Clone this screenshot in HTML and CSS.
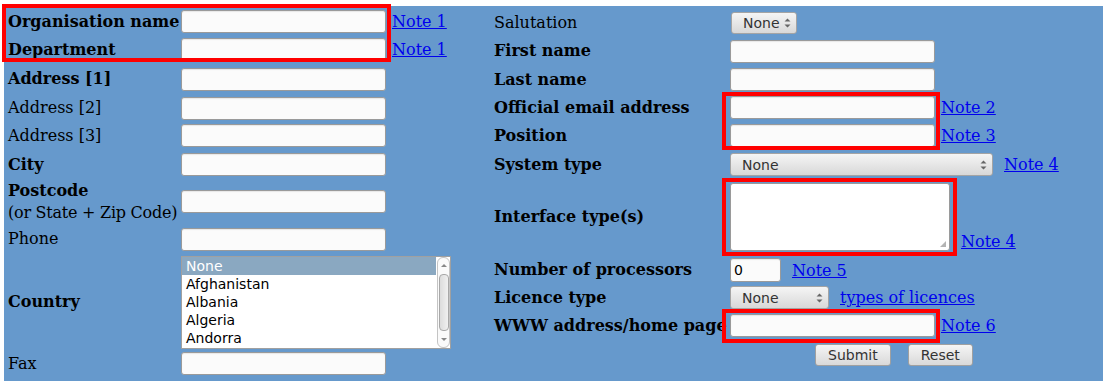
FILE: index.html
```html
<!DOCTYPE html>
<html lang="en">
<head>
    <meta charset="utf-8">
    <title>Registration form</title>
    <link rel="stylesheet" href="styles.css">
</head>
<body>
    <form class="panel" action="#">
        <!-- organisation details -->
        <div class="side side-left">
            <label class="label req" for="org">Organisation name</label>
            <div class="field"><input class="text" id="org" type="text"><a href="#note1">Note 1</a></div>

            <label class="label req" for="dept">Department</label>
            <div class="field"><input class="text" id="dept" type="text"><a href="#note1">Note 1</a></div>

            <label class="label req" for="addr1">Address [1]</label>
            <div class="field"><input class="text" id="addr1" type="text"></div>

            <label class="label" for="addr2">Address [2]</label>
            <div class="field"><input class="text" id="addr2" type="text"></div>

            <label class="label" for="addr3">Address [3]</label>
            <div class="field"><input class="text" id="addr3" type="text"></div>

            <label class="label req" for="city">City</label>
            <div class="field"><input class="text" id="city" type="text"></div>

            <label class="label" for="postcode"><b>Postcode</b><span class="sub">(or State + Zip Code)</span></label>
            <div class="field"><input class="text" id="postcode" type="text"></div>

            <label class="label" for="phone">Phone</label>
            <div class="field"><input class="text" id="phone" type="text"></div>

            <span class="label req">Country</span>
            <div class="field">
                <div class="listbox" role="listbox">
                    <div class="options">
                        <div class="opt selected">None</div>
                        <div class="opt">Afghanistan</div>
                        <div class="opt">Albania</div>
                        <div class="opt">Algeria</div>
                        <div class="opt">Andorra</div>
                    </div>
                    <div class="scrollbar">
                        <span class="arrow arrow-up"></span>
                        <span class="thumb"></span>
                        <span class="arrow arrow-down"></span>
                    </div>
                </div>
            </div>

            <label class="label" for="fax">Fax</label>
            <div class="field"><input class="text" id="fax" type="text"></div>
        </div>

        <!-- contact person -->
        <div class="side side-right">
            <label class="label" for="salutation">Salutation</label>
            <div class="field">
                <span class="dropdown dd-small">
                    <select id="salutation"><option>None</option><option>Mr</option><option>Ms</option><option>Dr</option></select>
                    <svg class="spin" width="7" height="10" viewBox="0 0 7 10"><path d="M0.5 3.5 L3.5 0.5 L6.5 3.5 Z M0.5 6.5 L3.5 9.5 L6.5 6.5 Z" fill="#666"/></svg>
                </span>
            </div>

            <label class="label req" for="first">First name</label>
            <div class="field"><input class="text" id="first" type="text"></div>

            <label class="label req" for="last">Last name</label>
            <div class="field"><input class="text" id="last" type="text"></div>

            <label class="label req" for="email">Official email address</label>
            <div class="field"><input class="text" id="email" type="text"><a href="#note2">Note 2</a></div>

            <label class="label req" for="position">Position</label>
            <div class="field"><input class="text" id="position" type="text"><a href="#note3">Note 3</a></div>

            <label class="label req" for="system">System type</label>
            <div class="field">
                <span class="dropdown dd-wide">
                    <select id="system"><option>None</option></select>
                    <svg class="spin" width="7" height="10" viewBox="0 0 7 10"><path d="M0.5 3.5 L3.5 0.5 L6.5 3.5 Z M0.5 6.5 L3.5 9.5 L6.5 6.5 Z" fill="#666"/></svg>
                </span>
                <a class="gap" href="#note4">Note 4</a>
            </div>

            <label class="label req" for="iface">Interface type(s)</label>
            <div class="field field-bottom">
                <span class="area"><textarea id="iface"></textarea></span>
                <a class="gap" href="#note4">Note 4</a>
            </div>

            <label class="label req" for="procs">Number of processors</label>
            <div class="field"><input class="text num" id="procs" type="text" value="0"><a class="gap" href="#note5">Note 5</a></div>

            <label class="label req" for="licence">Licence type</label>
            <div class="field">
                <span class="dropdown dd-mid">
                    <select id="licence"><option>None</option></select>
                    <svg class="spin" width="7" height="10" viewBox="0 0 7 10"><path d="M0.5 3.5 L3.5 0.5 L6.5 3.5 Z M0.5 6.5 L3.5 9.5 L6.5 6.5 Z" fill="#666"/></svg>
                </span>
                <a class="gap" href="#licences">types of licences</a>
            </div>

            <label class="label req" for="www">WWW address/home page</label>
            <div class="field"><input class="text" id="www" type="text"><a href="#note6">Note 6</a></div>

            <span class="label"></span>
            <div class="field buttons">
                <button type="submit" class="btn">Submit</button>
                <button type="reset" class="btn">Reset</button>
            </div>
        </div>

        <!-- review highlights -->
        <div class="mark mark-org"></div>
        <div class="mark mark-email"></div>
        <div class="mark mark-iface"></div>
        <div class="mark mark-www"></div>
    </form>
</body>
</html>
```

FILE: styles.css
```css
body {
    margin: 0;
    background: #fff;
    font-family: 'DejaVu Serif', serif;
    font-size: 16px;
    color: #000;
}
.panel {
    position: relative;
    display: flex;
    box-sizing: border-box;
    width: 1099px;
    height: 375px;
    margin: 6px 4px 0 4px;
    padding: 2px 4px;
    background: #6699cc;
}
.side {
    display: grid;
    align-items: center;
}
.side-left {
    width: 486px;
    grid-template-columns: 173px 1fr;
    grid-template-rows: 27px 29px 30px 28px 27px 31px 43px 32px 94px 29px;
}
.side-right {
    flex: 1;
    grid-template-columns: 236px 1fr;
    grid-template-rows: 29px 28px 29px 27px 29px 29px 76px 30px 25px 31px 28px;
}
.label {
    line-height: 22px;
    white-space: nowrap;
}
.req {
    font-weight: bold;
}
.label .sub {
    display: block;
    letter-spacing: -0.25px;
}
.field {
    display: flex;
    align-items: center;
    gap: 6px;
}
.field-bottom {
    align-items: flex-end;
    align-self: stretch;
    padding-bottom: 4px;
}
a {
    color: #0000ee;
    text-decoration: underline;
}
a.gap {
    margin-left: 5px;
}
.text {
    box-sizing: border-box;
    width: 205px;
    height: 23px;
    margin: 0;
    padding: 0 3px;
    border: 1px solid #9a9a9a;
    border-radius: 3px;
    background: #fbfbfb;
    box-shadow: inset 0 1px 1px rgba(0,0,0,0.08);
    font-family: 'DejaVu Sans', sans-serif;
    font-size: 14px;
}
.text.num {
    width: 51px;
    height: 24px;
}
.area {
    position: relative;
    display: block;
    line-height: 0;
}
.area::after {
    content: '';
    position: absolute;
    right: 4px;
    bottom: 4px;
    width: 0;
    height: 0;
    border-left: 6px solid transparent;
    border-bottom: 6px solid #b4b4b4;
}
textarea {
    box-sizing: border-box;
    width: 220px;
    height: 68px;
    margin: 0;
    border: 1px solid #9a9a9a;
    border-radius: 3px;
    background: #fff;
    resize: none;
    font-family: 'DejaVu Sans', sans-serif;
    font-size: 14px;
}
.dropdown {
    position: relative;
    display: inline-block;
}
.dropdown select {
    -webkit-appearance: none;
    appearance: none;
    box-sizing: border-box;
    height: 23px;
    margin: 0;
    padding: 0 14px 0 11px;
    border: 1px solid #a4a4a4;
    border-radius: 3px;
    background: linear-gradient(#f5f5f5, #d8d8d8);
    color: #333;
    font-family: 'DejaVu Sans', sans-serif;
    font-size: 14px;
}
.dd-small select { width: 66px; height: 22px; margin-left: 1px; padding-left: 11px; padding-right: 4px; }
.dd-wide select { width: 263px; }
.dd-mid select { width: 99px; }
.spin {
    position: absolute;
    right: 6px;
    top: 50%;
    margin-top: -5px;
    pointer-events: none;
}
.listbox {
    display: flex;
    box-sizing: border-box;
    width: 270px;
    height: 93px;
    border: 1px solid #a0a0a0;
    background: #fff;
    font-family: 'DejaVu Sans', sans-serif;
    font-size: 14px;
}
.options {
    flex: 1;
}
.opt {
    height: 18px;
    line-height: 18px;
    padding-left: 4px;
}
.opt.selected {
    background: #8aa8c1;
    color: #fff;
}
.scrollbar {
    display: flex;
    flex-direction: column;
    align-items: center;
    box-sizing: border-box;
    width: 13px;
    margin: 0 0 0 1px;
    border: 1px solid #c4c4c4;
    border-radius: 6px;
    background: #fafafa;
}
.arrow {
    width: 0;
    height: 0;
    margin: 6px 0;
    border-left: 3px solid transparent;
    border-right: 3px solid transparent;
}
.arrow-up { border-bottom: 3px solid #888; }
.arrow-down { border-top: 3px solid #888; }
.thumb {
    flex: 1;
    width: 8px;
    margin: 1px 0;
    border: 1px solid #a8a8a8;
    border-radius: 4px;
    background: linear-gradient(90deg, #dcdcdc, #f0f0f0);
}
.buttons {
    gap: 17px;
    padding-left: 85px;
}
.btn {
    box-sizing: border-box;
    height: 22px;
    margin: 0;
    padding: 0 12px;
    border: 1px solid #a0a0a0;
    border-radius: 3px;
    background: linear-gradient(#f5f5f5, #d9d9d9);
    color: #333;
    font-family: 'DejaVu Sans', sans-serif;
    font-size: 14px;
}
.mark {
    position: absolute;
    box-sizing: border-box;
    border: 4px solid #ff0000;
}
.mark-org { left: -2px; top: -2px; width: 389px; height: 58px; }
.mark-email { left: 718px; top: 86px; width: 218px; height: 58px; }
.mark-iface { left: 718px; top: 172px; width: 235px; height: 78px; }
.mark-www { left: 718px; top: 303px; width: 218px; height: 34px; }
```
